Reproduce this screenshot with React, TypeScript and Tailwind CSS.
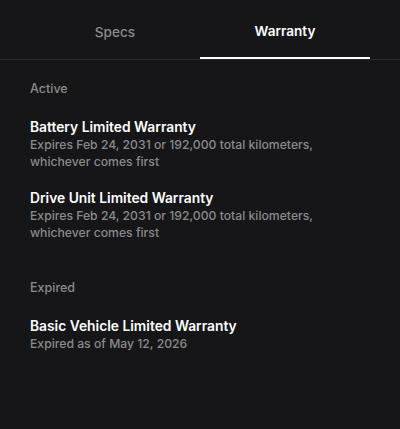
import React from 'react'

const font = { fontFamily: 'Inter, "Noto Sans", sans-serif' }

interface Item {
  title: string
  detail: string
}

const active: Item[] = [
  {
    title: 'Battery Limited Warranty',
    detail: 'Expires Feb 24, 2031 or 192,000 total kilometers, whichever comes first',
  },
  {
    title: 'Drive Unit Limited Warranty',
    detail: 'Expires Feb 24, 2031 or 192,000 total kilometers, whichever comes first',
  },
]

const expired: Item[] = [
  { title: 'Basic Vehicle Limited Warranty', detail: 'Expired as of May 12, 2026' },
]

function Section({ label, items }: { label: string; items: Item[] }) {
  return (
    <div>
      <p className="text-[12.5px] font-medium text-[#8a8a8c] leading-4">{label}</p>
      <div className="mt-[21px] flex flex-col gap-[19px]">
        {items.map(it => (
          <div key={it.title}>
            <p className="text-[13.8px] font-semibold text-white leading-[18px]">{it.title}</p>
            <p className="text-[12.2px] font-medium text-[#8a8a8c] leading-[17px] w-[300px]">{it.detail}</p>
          </div>
        ))}
      </div>
    </div>
  )
}

export default function App() {
  return (
    <div className="w-[400px] h-[429px] bg-[#161618] overflow-hidden" style={font}>
      {/* Tabs */}
      <div className="border-b border-[#2a2a2c]">
        <div className="flex px-[30px]">
          <button className="w-[170px] h-[59px] pt-[5px] flex items-center justify-center text-[13.6px] font-medium text-[#8a8a8c]">
            Specs
          </button>
          <button className="w-[170px] h-[59px] pt-[5px] flex items-center justify-center text-[13.6px] font-semibold text-white border-b-2 border-white -mb-px">
            Warranty
          </button>
        </div>
      </div>

      <div className="px-[30px] pt-[21px] flex flex-col gap-[39px]">
        <Section label="Active" items={active} />
        <Section label="Expired" items={expired} />
      </div>
    </div>
  )
}
